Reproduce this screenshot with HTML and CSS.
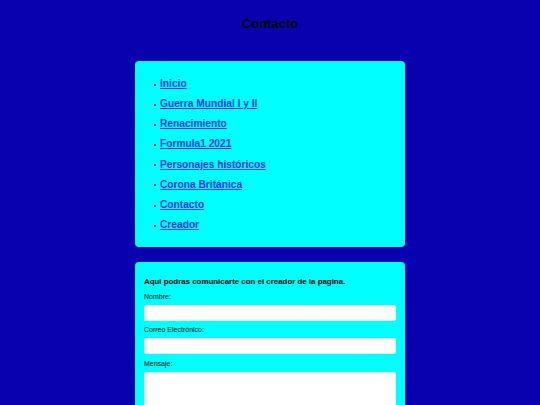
FILE: index.html
```html
<!DOCTYPE html>
<html lang="es">
<head>
<meta charset="utf-8">
<title>Contacto</title>
<link rel="stylesheet" href="styles.css">
</head>
<body>
<header class="top">
  <h1 class="title">Contacto</h1>
</header>
<nav class="card nav">
  <ul class="menu">
    <li class="item"><a href="#">Inicio</a></li>
    <li class="item"><a href="#">Guerra Mundial I y II</a></li>
    <li class="item"><a href="#">Renacimiento</a></li>
    <li class="item"><a href="#">Formula1 2021</a></li>
    <li class="item"><a href="#">Personajes históricos</a></li>
    <li class="item"><a href="#">Corona Británica</a></li>
    <li class="item"><a href="#">Contacto</a></li>
    <li class="item"><a href="#">Creador</a></li>
  </ul>
</nav>
<section class="card form-card">
  <h2 class="intro">Aqui podras comunicarte con el creador de la pagina.</h2>
  <form class="form">
    <label class="lbl" for="nombre">Nombre:</label>
    <input class="field" id="nombre" type="text">
    <label class="lbl" for="correo">Correo Electrónico:</label>
    <input class="field" id="correo" type="email">
    <label class="lbl" for="mensaje">Mensaje:</label>
    <textarea class="field area" id="mensaje"></textarea>
  </form>
</section>
</body>
</html>
```

FILE: styles.css
```css
html, body {
  margin: 0;
  padding: 0;
}
body {
  background: #0900af;
  font-family: "Liberation Sans", Arial, sans-serif;
  color: #000;
  padding-bottom: 20px;
}
.top {
  padding-top: 16px;
  text-align: center;
}
.title {
  margin: 0;
  font-size: 13px;
  line-height: 15px;
  font-weight: bold;
  color: #000;
}
.card {
  width: 270px;
  margin: 0 auto;
  background: #00ffff;
  border-radius: 4px;
  box-sizing: border-box;
}
.nav {
  margin-top: 30px;
  padding: 13px 0 12px;
}
.menu {
  margin: 0;
  padding: 0 0 0 19px;
  list-style: none;
}
.item {
  display: flex;
  align-items: center;
  font-size: 10.2px;
  line-height: 20.15px;
  font-weight: bold;
}
.item::before {
  content: "";
  width: 2px;
  height: 2px;
  background: #333;
  margin: 1px 4px 0 0;
}
.item a {
  color: #1836e4;
  text-decoration: underline;
}
.form-card {
  margin-top: 15px;
  padding: 14px 9px 20px;
}
.intro {
  margin: 0 0 4px;
  font-size: 7.9px;
  line-height: 12px;
  font-weight: bold;
  color: #000;
}
.form {
  display: flex;
  flex-direction: column;
}
.lbl {
  font-size: 7px;
  line-height: 10px;
  color: #000;
}
.field {
  display: block;
  width: 100%;
  box-sizing: border-box;
  height: 16px;
  margin: 3px 0 4px;
  border: 1px solid #e6fafa;
  border-radius: 2px;
  background: #fff;
  padding: 0 3px;
  font-family: inherit;
  font-size: 8px;
}
#correo {
  margin-bottom: 5px;
}
.area {
  height: 60px;
  resize: vertical;
}
```
